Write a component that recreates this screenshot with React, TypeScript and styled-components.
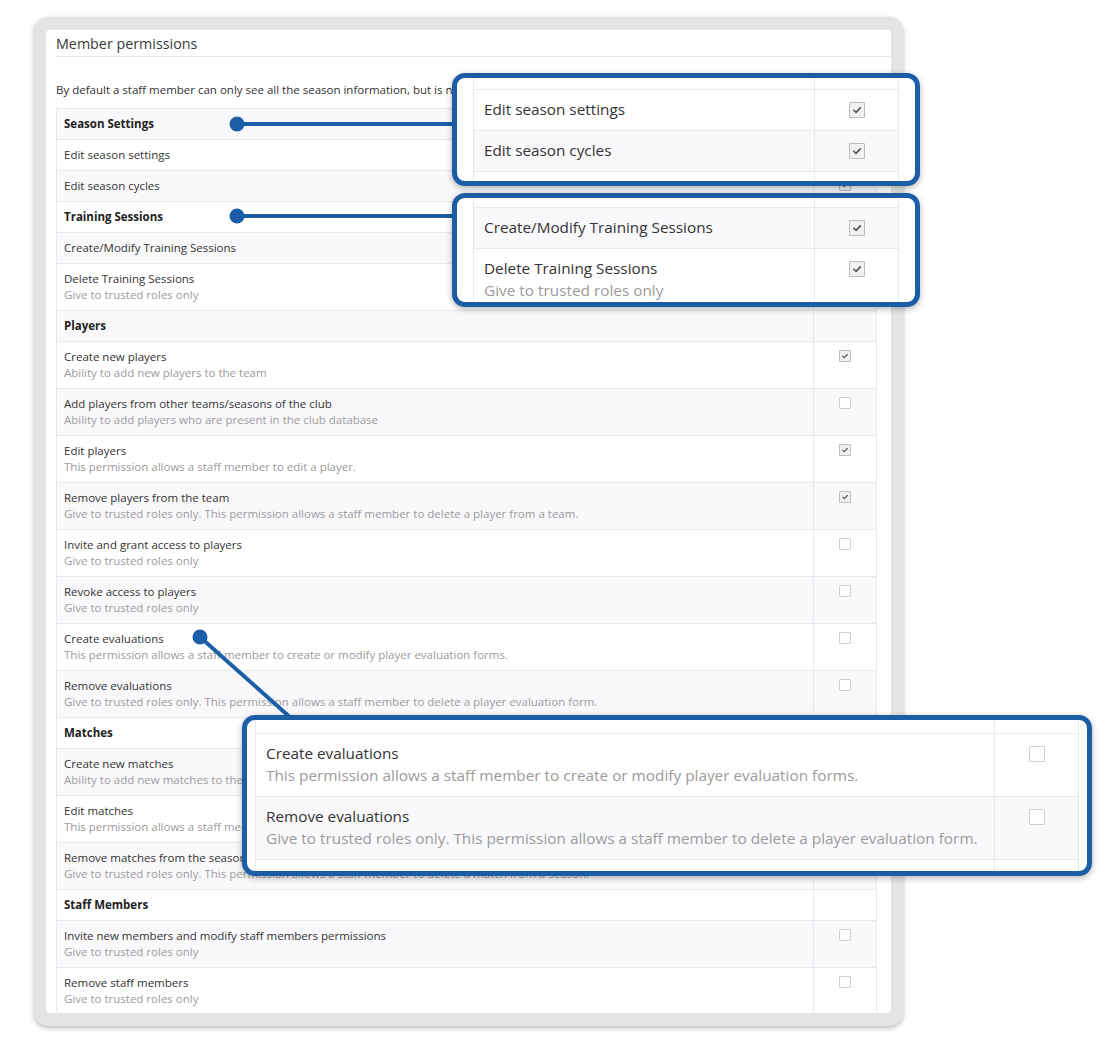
import React from "react";
import styled, { createGlobalStyle } from "styled-components";

type Perm = { title: string; desc?: string; checked?: boolean };
type Section = { name: string; perms: Perm[] };

const TRUSTED = "Give to trusted roles only";

const sections: Section[] = [
  {
    name: "Season Settings",
    perms: [
      { title: "Edit season settings", checked: true },
      { title: "Edit season cycles", checked: true },
    ],
  },
  {
    name: "Training Sessions",
    perms: [
      { title: "Create/Modify Training Sessions", checked: true },
      { title: "Delete Training Sessions", desc: TRUSTED, checked: true },
    ],
  },
  {
    name: "Players",
    perms: [
      { title: "Create new players", desc: "Ability to add new players to the team", checked: true },
      { title: "Add players from other teams/seasons of the club", desc: "Ability to add players who are present in the club database" },
      { title: "Edit players", desc: "This permission allows a staff member to edit a player.", checked: true },
      { title: "Remove players from the team", desc: "Give to trusted roles only. This permission allows a staff member to delete a player from a team.", checked: true },
      { title: "Invite and grant access to players", desc: TRUSTED },
      { title: "Revoke access to players", desc: TRUSTED },
      { title: "Create evaluations", desc: "This permission allows a staff member to create or modify player evaluation forms." },
      { title: "Remove evaluations", desc: "Give to trusted roles only. This permission allows a staff member to delete a player evaluation form." },
    ],
  },
  {
    name: "Matches",
    perms: [
      { title: "Create new matches", desc: "Ability to add new matches to the season", checked: true },
      { title: "Edit matches", desc: "This permission allows a staff member to edit a match.", checked: true },
      { title: "Remove matches from the season", desc: "Give to trusted roles only. This permission allows a staff member to delete a match from a season." },
    ],
  },
  {
    name: "Staff Members",
    perms: [
      { title: "Invite new members and modify staff members permissions", desc: TRUSTED },
      { title: "Remove staff members", desc: TRUSTED },
    ],
  },
];

const BLUE = "#1b5ea6";
const LINE = "#e8e9ee";
const STRIPE = "#f9f9fb";

const GlobalStyle = createGlobalStyle`
  html, body { margin: 0; padding: 0; background: #fff; }
  body { font-family: "Open Sans", "Liberation Sans", sans-serif; color: #333; }
`;

const Stage = styled.div`
  position: relative;
  width: 1100px;
  height: 1045px;
  overflow: hidden;
  box-sizing: border-box;
  padding: 17px 0 0 34px;
`;

const Frame = styled.div`
  width: 869px;
  height: 1009px;
  box-sizing: border-box;
  padding: 13px 12px;
  background: #e4e4e4;
  border-radius: 14px;
  box-shadow: 0 2px 5px rgba(0, 0, 0, 0.28);
`;

const Panel = styled.div`
  height: 100%;
  background: #fff;
  border-radius: 4px;
  overflow: hidden;
  padding-left: 10px;
`;

const Title = styled.h2`
  margin: 0;
  padding: 3px 0 2px;
  font-size: 14.3px;
  font-weight: 400;
  line-height: 21px;
  color: #3a3a3a;
  border-bottom: 1px solid #e6e6e6;
`;

const Intro = styled.p`
  margin: 25px 0 10px;
  font-size: 11.5px;
  line-height: 16px;
  color: #333;
  white-space: nowrap;
  overflow: hidden;
`;

const Table = styled.div`
  width: 821px;
  border-left: 1px solid ${LINE};
  border-right: 1px solid ${LINE};
  box-sizing: border-box;
`;

const Row = styled.div<{ $striped: boolean }>`
  display: grid;
  grid-template-columns: 1fr 63px;
  border-top: 1px solid ${LINE};
  background: ${(p) => (p.$striped ? STRIPE : "#fff")};
`;

const Label = styled.div`
  padding: 6px 7px 7px;
  min-width: 0;
`;

const PermTitle = styled.div<{ $head?: boolean }>`
  font-size: 11.5px;
  line-height: 17px;
  font-weight: ${(p) => (p.$head ? 700 : 400)};
  color: ${(p) => (p.$head ? "#222" : "#333")};
  white-space: nowrap;
`;

const PermDesc = styled.div`
  font-size: 11.5px;
  line-height: 16px;
  color: #9b9b9b;
  white-space: nowrap;
`;

const CheckCell = styled.div`
  border-left: 1px solid ${LINE};
  display: flex;
  justify-content: center;
  align-items: flex-start;
  padding-top: 8px;
`;

const Box = styled.span<{ $checked?: boolean; $size: number }>`
  display: inline-flex;
  align-items: center;
  justify-content: center;
  width: ${(p) => p.$size}px;
  height: ${(p) => p.$size}px;
  box-sizing: border-box;
  border: 1px solid ${(p) => (p.$checked ? "#bdbdbd" : "#cfcfcf")};
  border-radius: 1px;
  background: ${(p) => (p.$checked ? "#f0f0f0" : "#fff")};
  svg {
    width: 100%;
    height: 100%;
  }
`;

const Check: React.FC<{ checked?: boolean; size: number }> = ({ checked, size }) => (
  <Box $checked={checked} $size={size}>
    {checked && (
      <svg viewBox="0 0 12 12">
        <polyline points="3.3,6.2 5.2,8 8.8,4.2" fill="none" stroke="#555" strokeWidth="1.4" strokeLinecap="round" strokeLinejoin="round" />
      </svg>
    )}
  </Box>
);

/* magnified callouts */

const Callout = styled.div<{ $x: number; $y: number; $w: number; $h: number; $pad: number }>`
  position: absolute;
  left: ${(p) => p.$x}px;
  top: ${(p) => p.$y}px;
  width: ${(p) => p.$w}px;
  height: ${(p) => p.$h}px;
  box-sizing: border-box;
  border: 5px solid ${BLUE};
  border-radius: 13px;
  background: #fff;
  overflow: hidden;
  padding: 0 ${(p) => p.$pad}px;
  box-shadow: 0 2px 6px rgba(0, 0, 0, 0.3);
`;

const ZoomTable = styled.div<{ $col: number }>`
  display: grid;
  grid-template-columns: ${(p) => p.$col}px 1fr;
  border-left: 1px solid ${LINE};
  border-right: 1px solid ${LINE};
`;

const ZoomRow = styled.div<{ $striped?: boolean; $top?: boolean }>`
  display: contents;
  & > div {
    background: ${(p) => (p.$striped ? STRIPE : "#fff")};
    border-top: ${(p) => (p.$top ? "none" : `1px solid ${LINE}`)};
  }
`;

const ZoomLabel = styled.div`
  padding: 8px 10px 10px;
  min-width: 0;
`;

const ZoomTitle = styled.div`
  font-size: 15.3px;
  line-height: 22px;
  color: #333;
  white-space: nowrap;
`;

const ZoomDesc = styled.div`
  font-size: 15.35px;
  line-height: 22px;
  color: #9b9b9b;
  white-space: nowrap;
`;

const ZoomCheckCell = styled.div`
  border-left: 1px solid ${LINE};
  display: flex;
  justify-content: center;
  align-items: flex-start;
  padding-top: 12px;
`;

const FillCell = styled.div<{ $h: number; $divider?: boolean }>`
  height: ${(p) => p.$h}px;
  box-sizing: border-box;
  ${(p) => (p.$divider ? `border-left: 1px solid ${LINE};` : "")}
`;

const Filler: React.FC<{ h: number; first?: boolean }> = ({ h, first }) => (
  <ZoomRow $top={first}>
    <FillCell $h={h} />
    <FillCell $h={h} $divider />
  </ZoomRow>
);

const ZoomPerm: React.FC<{ perm: Perm; striped?: boolean }> = ({ perm, striped }) => (
  <ZoomRow $striped={striped}>
    <ZoomLabel>
      <ZoomTitle>{perm.title}</ZoomTitle>
      {perm.desc && <ZoomDesc>{perm.desc}</ZoomDesc>}
    </ZoomLabel>
    <ZoomCheckCell>
      <Check checked={perm.checked} size={16} />
    </ZoomCheckCell>
  </ZoomRow>
);

const Connectors = styled.svg`
  position: absolute;
  left: 0;
  top: 0;
  pointer-events: none;
`;

const PermissionsTable: React.FC = () => {
  let i = 0;
  return (
    <Table>
      {sections.map((s) => (
        <React.Fragment key={s.name}>
          <Row $striped={i++ % 2 === 0}>
            <Label>
              <PermTitle $head>{s.name}</PermTitle>
            </Label>
            <CheckCell />
          </Row>
          {s.perms.map((p) => (
            <Row key={p.title} $striped={i++ % 2 === 0}>
              <Label>
                <PermTitle>{p.title}</PermTitle>
                {p.desc && <PermDesc>{p.desc}</PermDesc>}
              </Label>
              <CheckCell>
                <Check checked={p.checked} size={12} />
              </CheckCell>
            </Row>
          ))}
        </React.Fragment>
      ))}
    </Table>
  );
};

const App: React.FC = () => {
  const [season, training, players] = sections;
  return (
    <Stage>
      <GlobalStyle />
      <Frame>
        <Panel>
          <Title>Member permissions</Title>
          <Intro>
            By default a staff member can only see all the season information, but is not allowed to change it. Grant the permissions below to allow more.
          </Intro>
          <PermissionsTable />
        </Panel>
      </Frame>

      <Connectors width="1100" height="1045" viewBox="0 0 1100 1045">
        <g stroke={BLUE} strokeWidth="4" fill={BLUE}>
          <line x1="237" y1="124" x2="455" y2="124" />
          <circle cx="237" cy="124" r="7.5" stroke="none" />
          <line x1="237" y1="216" x2="455" y2="216" />
          <circle cx="237" cy="216" r="7.5" stroke="none" />
          <line x1="200" y1="637" x2="292" y2="719" />
          <circle cx="200" cy="637" r="7.5" stroke="none" />
        </g>
      </Connectors>

      <Callout $x={452} $y={73} $w={468} $h={113} $pad={16}>
        <ZoomTable $col={340}>
          <Filler h={11} first />
          <ZoomPerm perm={season.perms[0]} />
          <ZoomPerm perm={season.perms[1]} striped />
          <Filler h={20} />
        </ZoomTable>
      </Callout>

      <Callout $x={452} $y={193} $w={468} $h={114} $pad={16}>
        <ZoomTable $col={340}>
          <Filler h={9} first />
          <ZoomPerm perm={training.perms[0]} striped />
          <ZoomPerm perm={training.perms[1]} />
        </ZoomTable>
      </Callout>

      <Callout $x={242} $y={715} $w={850} $h={161} $pad={8}>
        <ZoomTable $col={738}>
          <Filler h={13} first />
          <ZoomPerm perm={players.perms[6]} />
          <ZoomPerm perm={players.perms[7]} striped />
          <Filler h={20} />
        </ZoomTable>
      </Callout>
    </Stage>
  );
};

export default App;
